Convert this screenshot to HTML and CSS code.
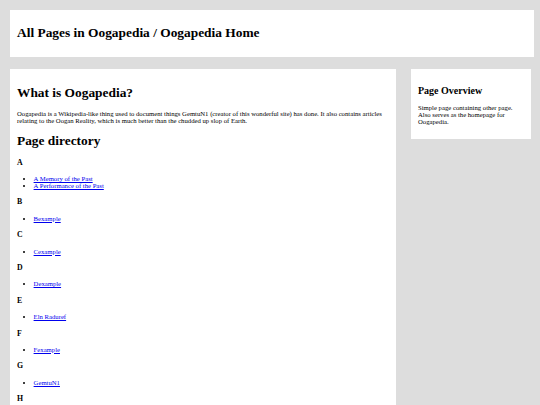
FILE: index.html
```html
<!DOCTYPE html>
<html lang="en">
<head>
<meta charset="utf-8">
<title>All Pages in Oogapedia / Oogapedia Home</title>
<link rel="stylesheet" href="styles.css">
</head>
<body>
<header class="header">
  <h1 class="site-title">All Pages in Oogapedia / Oogapedia Home</h1>
</header>
<div class="row">
  <main class="card main-card">
    <h1 class="card-title">What is Oogapedia?</h1>
    <p>Oogapedia is a Wikipedia-like thing used to document things GemtuN1 (creator of this wonderful site) has done. It also contains articles relating to the Oogan Reality, which is much better than the chudded up slop of Earth.</p>
    <h1 class="card-title">Page directory</h1>
    <h3 class="letter">A</h3>
    <ul class="pages">
      <li><a href="#">A Memory of the Past</a></li>
      <li><a href="#">A Performance of the Past</a></li>
    </ul>
    <h3 class="letter">B</h3>
    <ul class="pages"><li><a href="#">Bexample</a></li></ul>
    <h3 class="letter">C</h3>
    <ul class="pages"><li><a href="#">Cexample</a></li></ul>
    <h3 class="letter">D</h3>
    <ul class="pages"><li><a href="#">Dexample</a></li></ul>
    <h3 class="letter">E</h3>
    <ul class="pages"><li><a href="#">Eln Raduref</a></li></ul>
    <h3 class="letter">F</h3>
    <ul class="pages"><li><a href="#">Fexample</a></li></ul>
    <h3 class="letter">G</h3>
    <ul class="pages"><li><a href="#">GemtuN1</a></li></ul>
    <h3 class="letter">H</h3>
    <ul class="pages"><li><a href="#">Hexample</a></li></ul>
  </main>
  <aside class="card side-card">
    <h2 class="side-title">Page Overview</h2>
    <p>Simple page containing other page. Also serves as the homepage for Oogapedia.</p>
  </aside>
</div>
</body>
</html>
```
FILE: styles.css
```css
html, body {
  background: #dddddd;
}
body {
  margin: 0;
  padding: 10px 6px 0 10px;
  font-family: "Liberation Serif", "Times New Roman", serif;
  font-size: 6.7px;
  color: #000;
}
.header {
  background: #fff;
  padding: 15px 7px 16px;
}
.site-title {
  margin: 0;
  font-size: 13.4px;
  font-weight: bold;
}
.row {
  display: grid;
  grid-template-columns: 386px 120px;
  column-gap: 15px;
  align-items: start;
  margin-top: 12px;
}
.card {
  background: #fff;
  padding: 7px 7px;
}
.card > :first-child {
  margin-top: 8.6px;
}
.main-card {
  min-height: 400px;
}
.card-title {
  font-size: 13.4px;
  margin: 9px 0;
}
p {
  margin: 6.7px 0;
}
.letter {
  font-size: 7.8px;
  margin: 8.4px 0;
}
.pages {
  margin: 8.4px 0;
  padding-left: 16.6px;
}
.pages a {
  color: #0000ee;
}
.side-title {
  font-size: 10px;
  margin: 8.3px 0;
}
```
